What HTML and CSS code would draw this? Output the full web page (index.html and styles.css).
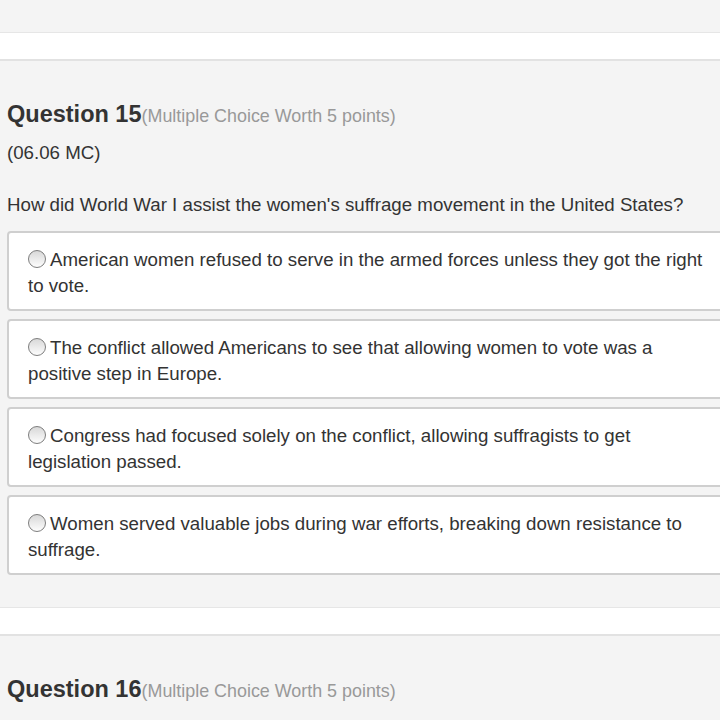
FILE: index.html
```html
<!DOCTYPE html>
<html>
<head>
<meta charset="utf-8">
<link rel="stylesheet" href="styles.css">
</head>
<body>
<div class="page">
  <div class="band"></div>
  <section class="question">
    <h2 class="q-title">Question 15<span class="q-worth">(Multiple Choice Worth 5 points)</span></h2>
    <p class="q-code">(06.06 MC)</p>
    <p class="q-text">How did World War I assist the women's suffrage movement in the United States?</p>
    <div class="options">
      <div class="option"><span class="radio"></span>American women refused to serve in the armed forces unless they got the right to vote.</div>
      <div class="option"><span class="radio"></span>The conflict allowed Americans to see that allowing women to vote was a positive step in Europe.</div>
      <div class="option"><span class="radio"></span>Congress had focused solely on the conflict, allowing suffragists to get legislation passed.</div>
      <div class="option"><span class="radio"></span>Women served valuable jobs during war efforts, breaking down resistance to suffrage.</div>
    </div>
  </section>
  <div class="band band-bottom"></div>
  <section class="question">
    <h2 class="q-title">Question 16<span class="q-worth">(Multiple Choice Worth 5 points)</span></h2>
  </section>
</div>
</body>
</html>
```
FILE: styles.css
```css
html, body {
  margin: 0;
  padding: 0;
  background: #f4f4f4;
  overflow: hidden;
}
.page {
  width: 720px;
  height: 720px;
  overflow: hidden;
  font-family: "Liberation Sans", Arial, sans-serif;
  color: #333;
  padding-top: 32px;
  box-sizing: border-box;
}
.band {
  height: 26px;
  background: #fff;
  border-top: 1px solid #e6e6e6;
  border-bottom: 2px solid #e2e2e2;
}
.band-bottom {
  margin-top: 32px;
}
.question {
  padding-left: 7px;
}
.q-title {
  margin: 0;
  padding-top: 39px;
  font-size: 23.5px;
  line-height: 28px;
  font-weight: bold;
  color: #333;
}
.q-worth {
  font-size: 17.9px;
  font-weight: normal;
  color: #999;
}
.q-code {
  margin: 12px 0 0;
  font-size: 18.7px;
  line-height: 22px;
}
.q-text {
  margin: 30px 0 0;
  font-size: 18.7px;
  line-height: 22px;
}
.options {
  margin-top: 15px;
  display: flex;
  flex-direction: column;
  gap: 8px;
}
.option {
  width: 740px;
  height: 80px;
  box-sizing: border-box;
  background: #fff;
  border: 2px solid #cfcfcf;
  border-radius: 4px;
  padding: 14px 30px 0 19px;
  font-size: 18.7px;
  line-height: 26px;
  color: #333;
}
.radio {
  display: inline-block;
  width: 18px;
  height: 18px;
  box-sizing: border-box;
  border: 1px solid #7d7d7d;
  border-radius: 50%;
  background: linear-gradient(#d8d8d8, #fdfdfd);
  margin-right: 4px;
  vertical-align: -2px;
}
```
